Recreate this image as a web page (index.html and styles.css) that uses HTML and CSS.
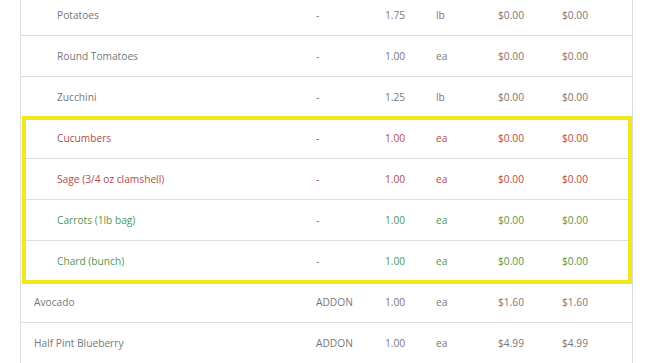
FILE: index.html
```html
<!DOCTYPE html>
<html>
<head>
<meta charset="utf-8">
<link rel="stylesheet" href="styles.css">
</head>
<body>
<div class="page">
  <div class="items">
    <div class="row"><span class="name sub">Potatoes</span><span>-</span><span>1.75</span><span>lb</span><span>$0.00</span><span>$0.00</span></div>
    <div class="row"><span class="name sub">Round Tomatoes</span><span>-</span><span>1.00</span><span>ea</span><span>$0.00</span><span>$0.00</span></div>
    <div class="row"><span class="name sub">Zucchini</span><span>-</span><span>1.25</span><span>lb</span><span>$0.00</span><span>$0.00</span></div>
    <div class="row removed"><span class="name sub">Cucumbers</span><span>-</span><span>1.00</span><span>ea</span><span>$0.00</span><span>$0.00</span></div>
    <div class="row removed"><span class="name sub">Sage (3/4 oz clamshell)</span><span>-</span><span>1.00</span><span>ea</span><span>$0.00</span><span>$0.00</span></div>
    <div class="row added"><span class="name sub">Carrots (1lb bag)</span><span>-</span><span>1.00</span><span>ea</span><span>$0.00</span><span>$0.00</span></div>
    <div class="row added"><span class="name sub">Chard (bunch)</span><span>-</span><span>1.00</span><span>ea</span><span>$0.00</span><span>$0.00</span></div>
    <div class="row"><span class="name">Avocado</span><span>ADDON</span><span>1.00</span><span>ea</span><span>$1.60</span><span>$1.60</span></div>
    <div class="row"><span class="name">Half Pint Blueberry</span><span>ADDON</span><span>1.00</span><span>ea</span><span>$4.99</span><span>$4.99</span></div>
    <div class="highlight"></div>
  </div>
</div>
</body>
</html>
```

FILE: styles.css
```css
html, body {
  margin: 0;
  padding: 0;
  background: #ffffff;
}
body {
  font-family: "Open Sans", "Liberation Sans", sans-serif;
  font-size: 10.2px;
  color: #777777;
  overflow: hidden;
}
.page {
  padding-left: 20px;
  width: 613px;
}
.items {
  position: relative;
  margin-top: -5px;
  border-left: 1px solid #dddddd;
  border-right: 1px solid #dddddd;
}
.row {
  display: grid;
  grid-template-columns: 282px 69px 51px 62px 64px 1fr;
  align-items: center;
  height: 39px;
  padding-left: 13px;
  padding-bottom: 1px;
  border-bottom: 1px solid #dddddd;
}
.name.sub {
  padding-left: 23px;
}
.removed {
  color: #b44a4a;
}
.added {
  color: #4f974f;
}
.highlight {
  position: absolute;
  left: 1px;
  top: 121px;
  width: 602px;
  height: 160px;
  border: 4px solid #f3e81f;
}
```
